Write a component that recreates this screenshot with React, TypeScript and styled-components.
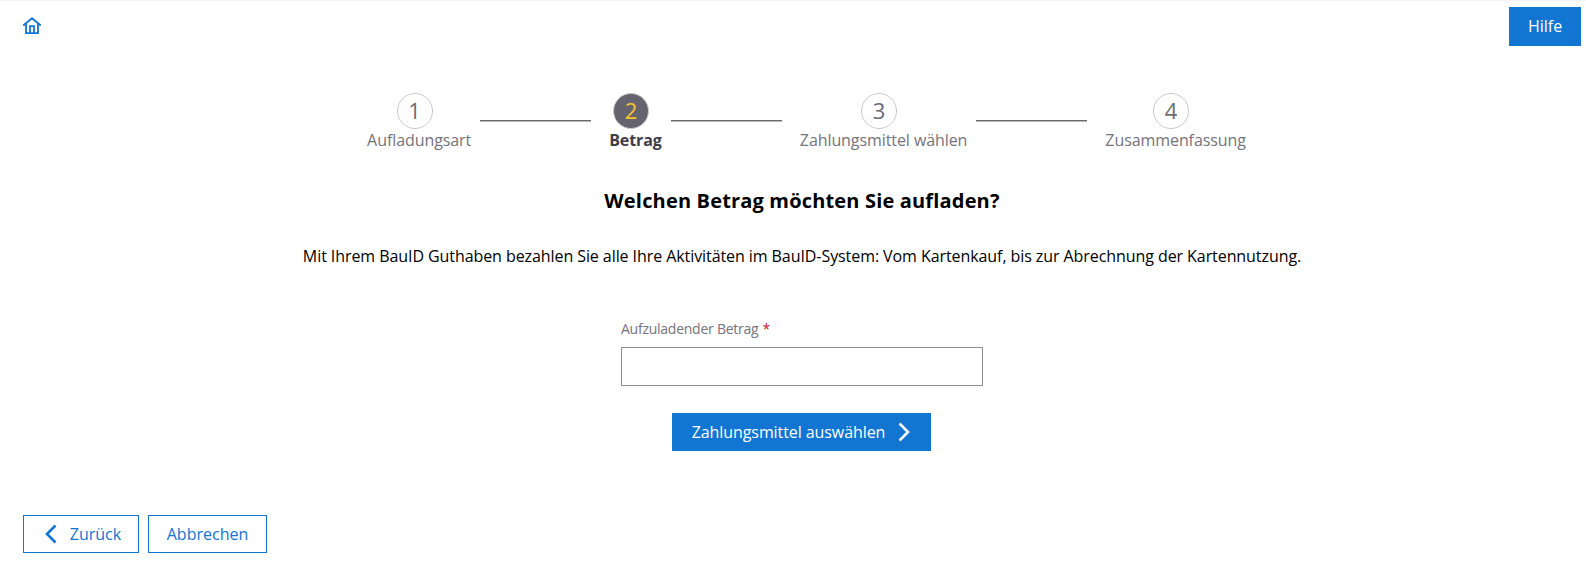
import React from "react";
import styled, { createGlobalStyle } from "styled-components";

const BLUE = "#1175d1";

const GlobalStyle = createGlobalStyle`
  html, body {
    margin: 0;
    padding: 0;
    background: #fff;
  }
  body {
    font-family: "Open Sans", "Liberation Sans", sans-serif;
    font-size: 16px;
    color: #000;
  }
`;

const Page = styled.div`
  display: flex;
  flex-direction: column;
  height: 575px;
  box-sizing: border-box;
  border-top: 1px solid #f4f4f4;
  overflow: hidden;
`;

const TopBar = styled.header`
  display: flex;
  justify-content: space-between;
  align-items: flex-start;
  height: 46px;
  padding: 6px 5px 0 23px;
  box-sizing: border-box;
`;

const HomeLink = styled.a`
  display: block;
  width: 18px;
  height: 18px;
  margin-top: 10px;
  color: ${BLUE};
`;

const HelpButton = styled.button`
  width: 72px;
  height: 39px;
  border: none;
  padding: 0 0 2px;
  background: ${BLUE};
  color: #fff;
  font: 400 16px "Open Sans", sans-serif;
`;

const Main = styled.main`
  display: flex;
  flex-direction: column;
  align-items: center;
  padding-left: 18px;
  padding-top: 46px;
`;

const Stepper = styled.ol`
  display: flex;
  align-items: flex-start;
  list-style: none;
  margin: 0;
  padding: 0;
`;

const Step = styled.li`
  display: flex;
  flex-direction: column;
  align-items: center;
  padding: 0 9px 0 18px;
`;

const Circle = styled.span<{ $active?: boolean }>`
  display: flex;
  align-items: center;
  justify-content: center;
  width: 36px;
  height: 36px;
  margin-right: 9px;
  padding-bottom: 2px;
  box-sizing: border-box;
  border-radius: 50%;
  border: 1px solid #c9c9c9;
  background: ${(p) => (p.$active ? "#65636e" : "#fff")};
  color: ${(p) => (p.$active ? "#f6c52f" : "#6d6b75")};
  font-size: 22px;
`;

const StepLabel = styled.span<{ $active?: boolean }>`
  margin-top: 1px;
  line-height: 21px;
  font-size: 16px;
  letter-spacing: -0.08px;
  font-weight: ${(p) => (p.$active ? 700 : 400)};
  color: ${(p) => (p.$active ? "#3e3d48" : "#75737c")};
  white-space: nowrap;
`;

const Connector = styled.li`
  width: 111px;
  height: 1px;
  margin-top: 27px;
  background: #6c6a73;
  box-shadow: 0 1px 0 #b9b8bd;
`;

const Title = styled.h1`
  margin: 36px 0 0;
  font-size: 20px;
  line-height: 27px;
  font-weight: 700;
  letter-spacing: 0.17px;
  color: #000;
`;

const Intro = styled.p`
  margin: 30px 0 0;
  font-size: 16px;
  line-height: 24px;
  letter-spacing: -0.075px;
  color: #000;
`;

const Field = styled.div`
  display: flex;
  flex-direction: column;
  width: 362px;
  margin-top: 51px;
`;

const FieldLabel = styled.label`
  font-size: 14px;
  line-height: 19px;
  letter-spacing: -0.25px;
  color: #75737c;
`;

const Required = styled.span`
  margin-left: 4px;
  color: #c8102e;
`;

const Input = styled.input`
  height: 39px;
  margin-top: 9px;
  box-sizing: border-box;
  border: 1px solid #8e8c96;
  border-radius: 0;
  padding: 0 10px;
  font: 400 16px "Open Sans", sans-serif;
  outline: none;
`;

const PrimaryButton = styled.button`
  display: flex;
  align-items: center;
  justify-content: center;
  gap: 13px;
  width: 259px;
  height: 38px;
  margin: 27px 1px 0 0;
  border: none;
  padding: 0 1px 0 0;
  background: ${BLUE};
  color: #fff;
  font: 400 16px "Open Sans", sans-serif;
  letter-spacing: -0.08px;
`;

const Footer = styled.footer`
  display: flex;
  gap: 9px;
  margin-top: 64px;
  padding-left: 23px;
`;

const OutlineButton = styled.button<{ $width: number }>`
  display: flex;
  align-items: center;
  justify-content: center;
  gap: 12px;
  width: ${(p) => p.$width}px;
  height: 38px;
  box-sizing: border-box;
  border: 1px solid ${BLUE};
  padding: 0;
  background: #fff;
  color: ${BLUE};
  font: 400 16px "Open Sans", sans-serif;
`;

const BackLabel = styled.span`
  display: flex;
  align-items: center;
  gap: 13px;
  margin-left: 4px;
`;

const HomeIcon = () => (
  <svg width="18" height="18" viewBox="0 0 18 18" fill="none" stroke="currentColor" strokeWidth="1.8">
    <path d="M0.8 8 L9 1.2 L17.2 8" strokeLinecap="round" strokeLinejoin="round" />
    <path d="M3 6.5 V16.2 H15 V6.5" />
    <path d="M7 16.2 V9.2 H11 V16.2" />
  </svg>
);

const Chevron = ({ left }: { left?: boolean }) => (
  <svg width="12" height="20" viewBox="0 0 12 20" fill="none" stroke="currentColor" strokeWidth="2.6">
    <path d={left ? "M10.5 1.5 L2 10 L10.5 18.5" : "M1.5 1.5 L10 10 L1.5 18.5"} />
  </svg>
);

const steps = ["Aufladungsart", "Betrag", "Zahlungsmittel wählen", "Zusammenfassung"];
const currentStep = 1;

const App = () => {
  return (
    <>
      <GlobalStyle />
      <Page>
        <TopBar>
          <HomeLink href="#">
            <HomeIcon />
          </HomeLink>
          <HelpButton>Hilfe</HelpButton>
        </TopBar>
        <Main>
          <Stepper>
            {steps.map((label, i) => (
              <React.Fragment key={label}>
                {i > 0 && <Connector />}
                <Step>
                  <Circle $active={i === currentStep}>{i + 1}</Circle>
                  <StepLabel $active={i === currentStep}>{label}</StepLabel>
                </Step>
              </React.Fragment>
            ))}
          </Stepper>
          <Title>Welchen Betrag möchten Sie aufladen?</Title>
          <Intro>
            Mit Ihrem BauID Guthaben bezahlen Sie alle Ihre Aktivitäten im BauID-System: Vom Kartenkauf, bis zur
            Abrechnung der Kartennutzung.
          </Intro>
          <Field>
            <FieldLabel>
              Aufzuladender Betrag<Required>*</Required>
            </FieldLabel>
            <Input />
          </Field>
          <PrimaryButton>
            Zahlungsmittel auswählen
            <Chevron />
          </PrimaryButton>
        </Main>
        <Footer>
          <OutlineButton $width={116}>
            <BackLabel>
              <Chevron left />
              Zurück
            </BackLabel>
          </OutlineButton>
          <OutlineButton $width={119}>Abbrechen</OutlineButton>
        </Footer>
      </Page>
    </>
  );
};

export default App;
